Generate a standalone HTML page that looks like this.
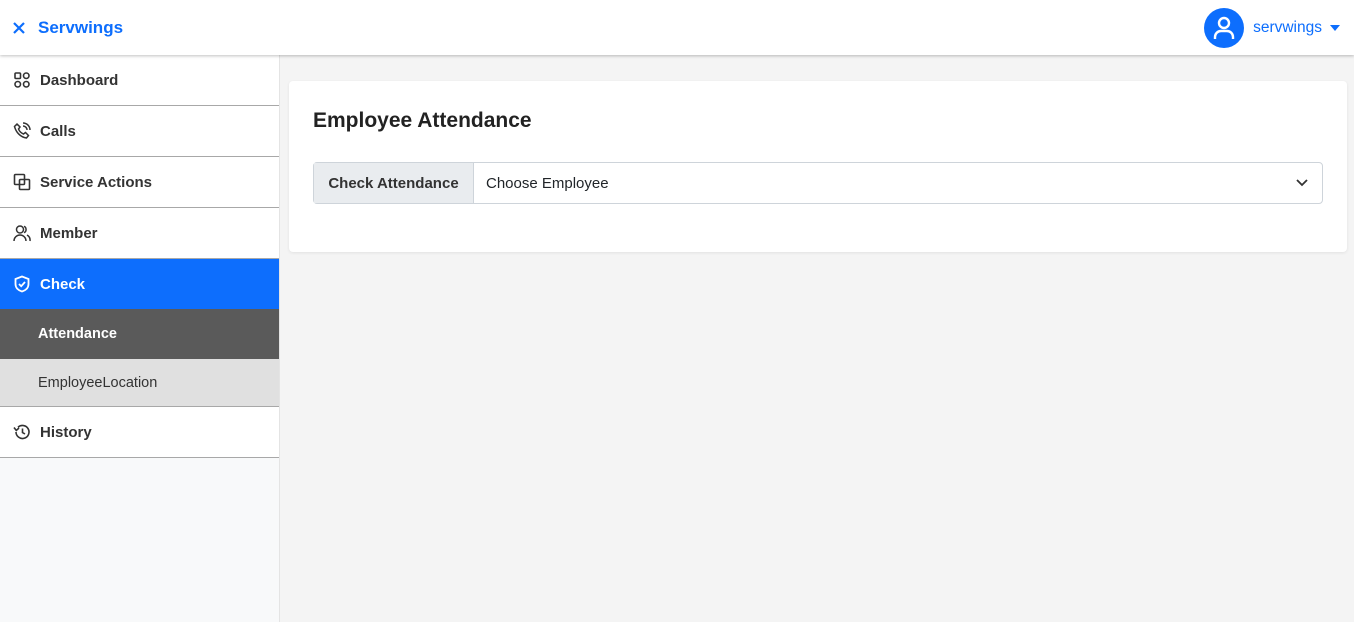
<!DOCTYPE html>
<html><head><style>
*{box-sizing:border-box;margin:0;padding:0}
body{width:1354px;height:622px;overflow:hidden;font-family:"Liberation Sans",sans-serif;background:#f4f4f4;position:relative;color:#212529}
.hdr{position:absolute;left:0;top:0;width:1354px;height:55px;background:#fff;box-shadow:0 1px 3px rgba(0,0,0,.25);z-index:2}
.brand{position:absolute;left:12px;top:18px;color:#0d6efd;font-weight:bold;font-size:17px;display:flex;align-items:center}
.brand span{margin-left:12px}
.user{position:absolute;right:14px;top:8px;display:flex;align-items:center;color:#0d6efd;font-size:15.5px}
.av{width:40px;height:40px;border-radius:50%;background:#0d6efd;display:flex;align-items:center;justify-content:center;margin-right:9px}
.side{position:absolute;left:0;top:55px;width:280px;height:567px;background:#f8f9fa;border-right:1px solid #e4e4e4}
.it{height:51px;background:#fff;border-bottom:1px solid #a8a8a8;display:flex;align-items:center;padding-left:13px;font-size:15px;font-weight:bold;color:#333;width:279px}
.it svg{margin-right:9px;flex:none}
.it.act{background:#0d6efd;color:#fff;border-bottom:none;height:50px}
.sub{height:50px;display:flex;align-items:center;padding-left:38px;font-size:14.5px;width:279px}
.main{position:absolute;left:289px;top:81px;width:1058px;height:171px;background:#fff;border-radius:4px;box-shadow:0 1px 3px rgba(0,0,0,.08)}
h1{position:absolute;left:24px;top:28px;font-size:21px;font-weight:bold;color:#222}
.ig{position:absolute;left:24px;top:81px;width:1010px;height:42px;border:1px solid #ced4da;border-radius:4px;display:flex;font-size:15px}
.lab{width:160px;background:#e9ecef;border-right:1px solid #ced4da;display:flex;align-items:center;justify-content:center;font-weight:bold;color:#333}
.sel{flex:1;display:flex;align-items:center;padding-left:12px;position:relative}
</style></head><body>
<div class="hdr">
<div class="brand"><svg width="14" height="14" viewBox="0 0 14 14"><path d="M2 2L12 12M12 2L2 12" stroke="#0d6efd" stroke-width="2.2"/></svg><span>Servwings</span></div>
<div class="user" style="right:14px"><div class="av"><svg width="22" height="24" viewBox="0 0 22 24" fill="none" stroke="#fff" stroke-width="2.4"><circle cx="11" cy="7" r="5"/><path d="M2 23v-2a6 6 0 0 1 6-6h6a6 6 0 0 1 6 6v2"/></svg></div>servwings<svg style="margin-left:8px" width="10" height="6" viewBox="0 0 10 6"><path d="M0 0h10L5 6z" fill="#0d6efd"/></svg></div>
</div>
<div class="side">
<div class="it"><svg width="18" height="18" viewBox="0 0 18 18" fill="none" stroke="#333" stroke-width="1.6"><rect x="2" y="2" width="5.5" height="5.5" rx="1"/><rect x="10.5" y="2" width="5.5" height="5.5" rx="2.7"/><rect x="2" y="10.5" width="5.5" height="5.5" rx="2.7"/><rect x="10.5" y="10.5" width="5.5" height="5.5" rx="2.7"/></svg>Dashboard</div>
<div class="it"><svg width="18" height="18" viewBox="0 0 18 18" fill="none" stroke="#333" stroke-width="1.5"><path d="M4 2l3 3-1.5 2a9 9 0 0 0 5 5L12.5 10.5l3 3-2 2.5C7 15 3 10 1.5 4.5z"/><path d="M10 4a4 4 0 0 1 4 4M10 1a7 7 0 0 1 7 7"/></svg>Calls</div>
<div class="it"><svg width="18" height="18" viewBox="0 0 18 18" fill="none" stroke="#333" stroke-width="1.6"><rect x="1.5" y="1.5" width="10" height="10" rx="1"/><rect x="6.5" y="6.5" width="10" height="10" rx="1"/></svg>Service Actions</div>
<div class="it"><svg width="18" height="18" viewBox="0 0 18 18" fill="none" stroke="#333" stroke-width="1.5"><circle cx="7" cy="5.5" r="3.5"/><path d="M1 17a6 6 0 0 1 12 0M11 2.3a3.5 3.5 0 0 1 0 6.4M14 11a6 6 0 0 1 3 6"/></svg>Member</div>
<div class="it act"><svg width="18" height="18" viewBox="0 0 18 18" fill="none" stroke="#fff" stroke-width="1.8"><path d="M9 1.5l6.5 2.5v5c0 4-3 6.5-6.5 7.5C5.5 15.5 2.5 13 2.5 9V4z"/><path d="M6 9l2.2 2.2L12 7"/></svg>Check</div>
<div class="sub" style="background:#5a5a5a;color:#fff;font-weight:bold">Attendance</div>
<div class="sub" style="background:#e0e0e0;color:#333;border-bottom:1px solid #a8a8a8;height:48px">EmployeeLocation</div>
<div class="it"><svg width="18" height="18" viewBox="0 0 18 18" fill="none" stroke="#333" stroke-width="1.6"><path d="M3 9a6.5 6.5 0 1 0 2-4.7"/><path d="M1 4.5l2.3 3 2.7-2.5"/><path d="M9.5 5.5v4l2.5 1.5"/></svg>History</div>
</div>
<div class="main">
<h1>Employee Attendance</h1>
<div class="ig"><div class="lab">Check Attendance</div><div class="sel">Choose Employee<svg style="position:absolute;right:14px;top:16px" width="12" height="8" viewBox="0 0 12 8"><path d="M1 1l5 5 5-5" fill="none" stroke="#333" stroke-width="1.8"/></svg></div></div>
</div>
</body></html>
